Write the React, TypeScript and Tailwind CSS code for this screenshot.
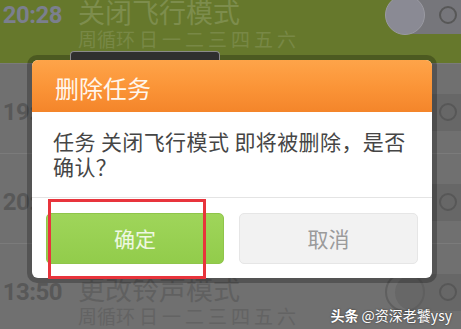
import React from 'react';

const cjk = { fontFamily: '"Noto Sans CJK SC", "Noto Sans", sans-serif' };
const digits = { fontFamily: 'Roboto, "Liberation Sans", sans-serif' };

const days = ['日', '一', '二', '三', '四', '五', '六'];

interface Task {
  time: string;
  title: string;
  active?: boolean;
}

const tasks: Task[] = [
  { time: '20:28', title: '关闭飞行模式', active: true },
  { time: '19:30', title: '开启飞行模式' },
  { time: '20:30', title: '开启静音模式' },
  { time: '13:50', title: '更改铃声模式' },
];

function Toggle({ active }: { active?: boolean }) {
  return (
    <div className="relative w-[76px] h-[40px] mt-[28px] shrink-0">
      <div
        className={
          active
            ? 'absolute right-0 top-[2px] w-[66px] h-[37px] rounded-l-full bg-[#76767b]'
            : 'absolute right-0 top-[2px] w-[66px] h-[37px] rounded-l-full bg-[#676767]'
        }
      />
      <div
        className={
          active
            ? 'absolute left-0 top-0 w-[40px] h-[40px] rounded-full bg-[#8a8a94] border border-[#9a9aa2]'
            : 'absolute left-0 top-0 w-[40px] h-[40px] rounded-full border-2 border-[#5f5f5f]'
        }
      />
      <div className="absolute left-[54px] top-[11px] w-[18px] h-[18px] rounded-full border-2 border-[#575757]" />
    </div>
  );
}

function TaskRow({ task, first }: { task: Task; first?: boolean }) {
  return (
    <div
      className={
        (first ? 'h-[96px] -mt-[33px] ' : 'h-[90px] border-t border-[#7b7b7b] ') +
        (task.active ? 'bg-[#66782c] ' : 'bg-[#707070] ') +
        'flex items-start'
      }
    >
      <div
        style={digits}
        className={
          'w-[62px] text-right text-[24px] leading-[28px] font-bold mt-[34px] tracking-[-0.5px] ' +
          (task.active ? 'text-[#7b7f8e]' : 'text-[#585858]')
        }
      >
        {task.time}
      </div>
      <div className="ml-[16px] mt-[31px] flex flex-col" style={cjk}>
        <span className={'text-[27px] leading-[27px] ' + (task.active ? 'text-[#7d8d4d]' : 'text-[#606060]')}>
          {task.title}
        </span>
        <div
          className={
            'mt-[3px] flex gap-[4px] text-[19px] leading-[22px] ' +
            (task.active ? 'text-[#788846]' : 'text-[#636363]')
          }
        >
          <span>周循环</span>
          {days.map((d) => (
            <span key={d}>{d}</span>
          ))}
        </div>
      </div>
      <div className="ml-auto">
        <Toggle active={task.active} />
      </div>
    </div>
  );
}

function DeleteDialog() {
  return (
    <div className="w-[410px] rounded-[10px] bg-black/25 p-[5px]">
      <div className="relative rounded-[6px] overflow-hidden bg-white" style={cjk}>
        <div className="h-[52px] pl-[23px] pt-[4px] flex items-center bg-gradient-to-b from-[#fea449] via-[#fb9538] to-[#f4852a]">
          <span className="text-[24px] leading-[28px] text-[#fff6ec]">删除任务</span>
        </div>
        <div className="px-[21px] pt-[17px] pb-[18px] text-[21px] leading-[25px] tracking-[0.4px] text-[#454545]">
          任务 关闭飞行模式 即将被删除，是否确认？
        </div>
        <div className="border-t border-[#e4e4e4] px-[14px] pt-[15px] pb-[14px] flex gap-[15px]">
          <button className="w-[178px] h-[51px] rounded-[5px] bg-gradient-to-b from-[#9fd55a] to-[#92cc4b] border border-[#8fc54a] text-[21px] text-[#eef8e2]">
            确定
          </button>
          <button className="w-[179px] h-[51px] rounded-[5px] bg-[#f2f2f2] border border-[#e6e6e6] text-[21px] text-[#9b9b9b]">
            取消
          </button>
        </div>
      </div>
    </div>
  );
}

export default function App() {
  return (
    <div className="relative w-[461px] h-[329px] overflow-hidden bg-[#707070]">
      <div className="flex flex-col">
        {tasks.map((t, i) => (
          <TaskRow key={t.time} task={t} first={i === 0} />
        ))}
      </div>

      <div className="absolute inset-0 pt-[55px] pl-[27px]">
        <DeleteDialog />
      </div>

      {/* toast tab peeking above the dialog */}
      <div className="absolute left-[70px] top-[51px] w-[150px] h-[9px] rounded-t-[4px] bg-[#2f2f2f] border border-b-0 border-[#8a8a8a]" />

      {/* annotation box */}
      <div className="absolute left-[48px] top-[199px] w-[158px] h-[80px] border-[3px] border-[#e8343c]" />

      <div
        className="absolute right-[9px] bottom-[6px] text-[14px] leading-[16px] text-white"
        style={{ ...cjk, textShadow: '0 0 2px rgba(0,0,0,0.6)' }}
      >
        <span className="font-bold">头条</span> @资深老饕ysy
      </div>
    </div>
  );
}
